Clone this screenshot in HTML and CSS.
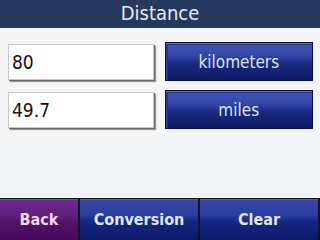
FILE: index.html
```html
<!DOCTYPE html>
<html lang="en">
<head>
  <meta charset="UTF-8">
  <title>Distance</title>
  <link rel="stylesheet" href="styles.css">
</head>
<body>
  <div class="screen">
    <div class="title">Distance</div>

    <div class="content">
      <div class="row">
        <div class="field">80</div>
        <button class="unit">kilometers</button>
      </div>
      <div class="row">
        <div class="field">49.7</div>
        <button class="unit">miles</button>
      </div>
    </div>

    <div class="toolbar">
      <button class="tool back">Back</button>
      <button class="tool">Conversion</button>
      <button class="tool">Clear</button>
    </div>
  </div>
</body>
</html>
```

FILE: styles.css
```css
body {
  margin: 0;
  font-family: 'DejaVu Sans Condensed', 'DejaVu Sans', sans-serif;
}
.screen {
  width: 320px;
  height: 240px;
  display: flex;
  flex-direction: column;
  background-color: #f4f5f6;
  overflow: hidden;
}
.title {
  height: 28px;
  line-height: 27px;
  background-color: #25385d;
  color: #e6eaf3;
  font-size: 20px;
  text-align: center;
}
.content {
  flex: 1;
  padding: 14px 7px 0 8px;
  display: flex;
  flex-direction: column;
  gap: 9px;
}
.row {
  display: flex;
  align-items: center;
  gap: 11px;
}
.field {
  width: 142px;
  height: 34px;
  line-height: 34px;
  padding-left: 3px;
  background: #fff;
  border: 1px solid #c8c8c8;
  box-shadow: 1px 1px 0 #6a6a6a, 2px 2px 1px #9a9a9a;
  font-size: 19px;
  color: #111;
}
.unit {
  width: 150px;
  height: 39px;
  border: 1px solid #0b1145;
  padding: 0;
  font-family: inherit;
  font-size: 17px;
  color: #dfe4f6;
  background: linear-gradient(to bottom, #4056b4 0%, #3247a6 35%, #1a2b84 55%, #0b1760 100%);
  box-shadow: inset 0 1px 0 #5a6dc4, inset 3px 3px 0 -1px #263893;
}
.toolbar {
  height: 41px;
  padding: 1px 2px 0 0;
  background-color: #0f1430;
  display: grid;
  grid-template-columns: 78px 118px 118px;
  gap: 2px;
}
.tool {
  border: none;
  padding: 0;
  font-family: inherit;
  font-weight: bold;
  font-size: 16px;
  color: #e2e7f6;
  background: linear-gradient(to bottom, #3448a6 0%, #2a3d9c 40%, #152683 55%, #0d1a68 100%);
  box-shadow: inset 0 1px 0 #4a5dba;
}
.back {
  color: #eadcf0;
  background: linear-gradient(to bottom, #6d2a88 0%, #62207e 40%, #521269 55%, #450a58 100%);
  box-shadow: inset 0 1px 0 #8346a0;
}
```
